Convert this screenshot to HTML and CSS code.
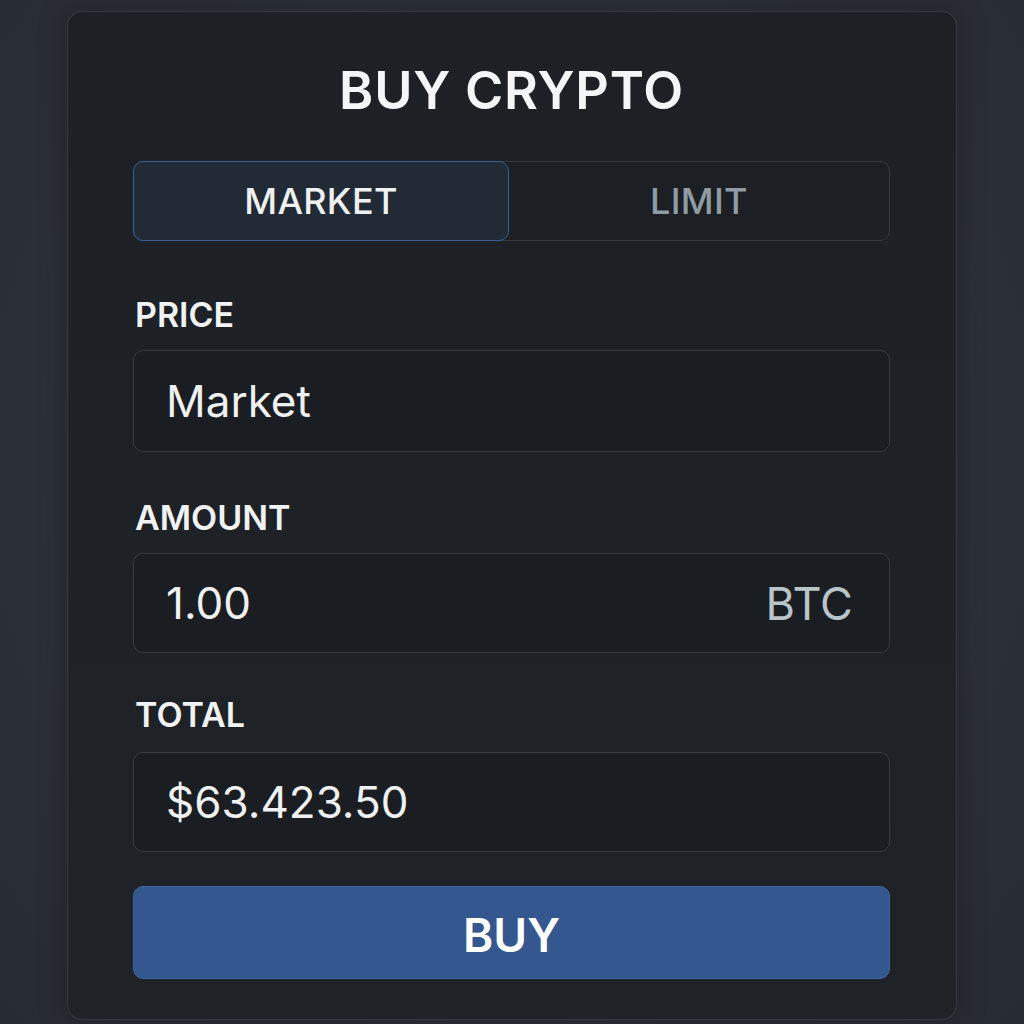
FILE: index.html
```html
<!DOCTYPE html>
<html>
<head>
<meta charset="utf-8">
<link rel="stylesheet" href="styles.css">
</head>
<body>
<div class="card">
  <h1 class="title">BUY CRYPTO</h1>
  <div class="tabs">
    <div class="tab active">MARKET</div>
    <div class="tab">LIMIT</div>
  </div>
  <div class="label label-price">PRICE</div>
  <div class="field field-price"><span class="value">Market</span></div>
  <div class="label label-amount">AMOUNT</div>
  <div class="field field-amount"><span class="value">1.00</span><span class="unit">BTC</span></div>
  <div class="label label-total">TOTAL</div>
  <div class="field field-total"><span class="value">$63.423.50</span></div>
  <button class="buy">BUY</button>
</div>
</body>
</html>
```
FILE: styles.css
```css
* { box-sizing: border-box; }
html, body { margin: 0; padding: 0; }
body {
  width: 1024px;
  height: 1024px;
  background: radial-gradient(ellipse at 50% 45%, #323740 0%, #2c3138 60%, #272b32 100%);
  font-family: Inter, "Noto Sans", sans-serif;
  overflow: hidden;
  padding-top: 11px;
}
.card {
  width: 890px;
  height: 1009px;
  margin-left: 67px;
  background: linear-gradient(180deg, #1d2025 0%, #1f2227 100%);
  border: 1px solid #353a41;
  border-radius: 15px;
  padding: 49px 66px 0 65px;
  display: flex;
  flex-direction: column;
  box-shadow: 0 0 30px rgba(0,0,0,0.25);
}
.title {
  margin: 0;
  font-size: 52px;
  line-height: 60px;
  font-weight: 600;
  letter-spacing: 0.8px;
  color: #f4f5f6;
  text-align: center;
}
.tabs {
  margin-top: 40px;
  height: 80px;
  display: flex;
  border: 1px solid #363b42;
  border-radius: 10px;
  background: #1c1f23;
}
.tab {
  flex: 1;
  display: flex;
  align-items: center;
  justify-content: center;
  font-size: 36px;
  font-weight: 500;
  color: #8f9ca3;
  letter-spacing: 0.3px;
}
.tab.active {
  flex: 0 0 376px;
  margin: -1px 0 -1px -1px;
  background: #222a36;
  border: 1px solid #3a5f98;
  border-radius: 10px;
  color: #eef0f2;
}
.label {
  font-size: 34px;
  line-height: 40px;
  font-weight: 600;
  color: #f0f2f4;
  padding-left: 2px;
}
.label-price { margin-top: 54px; }
.label-amount { margin-top: 46px; }
.label-total { margin-top: 42px; }
.field {
  margin-top: 15px;
  height: 102px;
  background: #1a1d21;
  border: 1px solid #363c43;
  border-radius: 10px;
  display: flex;
  align-items: center;
  justify-content: space-between;
  padding: 0 36px 0 32px;
}
.field-amount { margin-top: 15px; height: 100px; }
.field-total { margin-top: 17px; height: 100px; }
.value {
  font-size: 44px;
  font-weight: 400;
  color: #eef0f2;
}
.unit {
  font-size: 45px;
  font-weight: 400;
  color: #b9c4c8;
}
.buy {
  margin-top: 34px;
  height: 93px;
  border: 1px solid #3b63a0;
  border-radius: 10px;
  background: #34578f;
  color: #ffffff;
  font-family: Inter, "Noto Sans", sans-serif;
  font-size: 46px;
  font-weight: 600;
  padding-top: 6px;
  cursor: pointer;
}
```
